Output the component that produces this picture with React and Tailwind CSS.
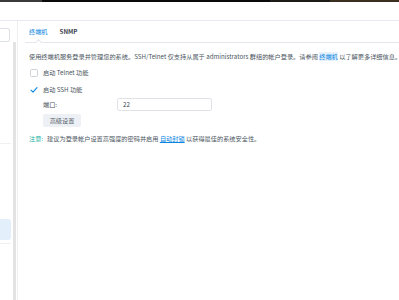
import React from "react";

export default function App() {
  return (
    <div className="w-[399px] h-[300px] overflow-hidden bg-white flex flex-col font-['Noto_Sans_CJK_SC','Noto_Sans',sans-serif] text-[6.2px] leading-[8px] text-[#4b5560]">
      {/* window top strip */}
      <div className="h-[2px] flex shrink-0">
        <div className="w-[42px] bg-[#3a3a3a]" />
        <div className="w-[228px] bg-[#0a0a0a]" />
        <div className="w-[60px] bg-[#1d1b17]" />
        <div className="flex-1 bg-[#3b3020]" />
      </div>

      {/* header */}
      <div className="h-[19px] shrink-0 border-b border-[#e6e9ed]" />

      <div className="flex flex-1 min-h-0">
        {/* sidebar */}
        <div className="w-[18px] shrink-0 border-r border-[#eceef1] flex flex-col">
          <div className="h-[21px] pt-[7px] shrink-0">
            <div className="h-[14px] w-[10px] border border-l-0 border-[#dde1e6] rounded-r-[3px]" />
          </div>
          <div className="flex flex-1">
            <div className="w-[13px] flex flex-col">
              <div className="h-[101px]" />
              <div className="w-[11px] border-b border-[#eef0f2]" />
              <div className="h-[75px]" />
              <div className="h-[21px] w-[11px] bg-[#e4effc] rounded-r-[3px]" />
              <div className="h-[4px] w-[11px] border-b border-[#eef0f2]" />
            </div>
            <div className="w-[3px] bg-[#e3e3e3]" />
          </div>
        </div>

        {/* main */}
        <div className="flex-1 min-w-0 pl-[7px]">
          <div className="relative h-[22px] border-b border-[#e3e6ea] flex items-center pl-[4px] gap-[12px]">
            <span className="text-[#0a85e0]">终端机</span>
            <span className="font-bold text-[#3c4650]">SNMP</span>
            <div className="absolute left-[11px] bottom-[-3px] w-[5px] h-[5px] bg-white border-l border-t border-[#e3e6ea] rotate-45" />
          </div>

          <div className="pl-[4px] pt-[10px]">
            <div className="whitespace-nowrap">
              使用终端机服务登录并管理您的系统。SSH/Telnet 仅支持从属于 administrators 群组的帐户登录。请参阅{" "}
              <span className="text-[#0a85e0] bg-[#e6f1fc]">终端机</span> 以了解更多详细信息。
            </div>

            <div className="mt-[7px] flex items-center h-[9px]">
              <div className="ml-[1px] w-[8px] h-[8px] border border-[#cdd2d8] rounded-[1.5px] bg-white" />
              <span className="ml-[5px]">启动 Telnet 功能</span>
            </div>

            <div className="mt-[8px] flex items-center h-[9px]">
              <div className="ml-[1px] w-[8px] h-[8px] flex items-center justify-center">
                <svg width="8" height="8" viewBox="0 0 8 8" fill="none">
                  <path d="M1 4.2 L3 6.2 L7 1.6" stroke="#0a85e0" strokeWidth="1.1" strokeLinecap="round" strokeLinejoin="round" />
                </svg>
              </div>
              <span className="ml-[5px]">启动 SSH 功能</span>
            </div>

            <div className="mt-[4px] ml-[14px] flex items-center">
              <span className="w-[74px]">端口:</span>
              <div className="w-[95px] h-[13px] border border-[#dfe3e8] rounded-[2px] flex items-center pl-[5px] text-[#3c4650]">
                22
              </div>
            </div>

            <div className="mt-[3px] ml-[14px] w-[38px] h-[13px] rounded-[2px] bg-[#edf0f4] flex items-center justify-center text-[#55606b]">
              高级设置
            </div>

            <div className="mt-[8px] whitespace-nowrap">
              <span className="text-[#1db3a6]">注意:</span>
              <span className="ml-[4px]">建议为登录帐户设置高强度的密码并启用 </span>
              <span className="text-[#0a85e0] underline">自动封锁</span>
              <span> 以获得最佳的系统安全性。</span>
            </div>
          </div>
        </div>
      </div>
    </div>
  );
}
